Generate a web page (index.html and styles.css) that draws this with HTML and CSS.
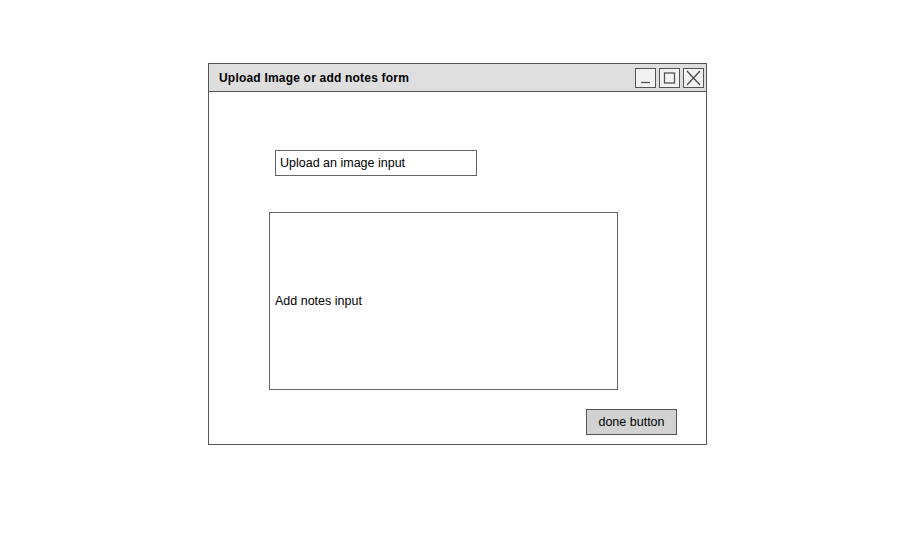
FILE: index.html
```html
<!DOCTYPE html>
<html>
<head>
<meta charset="utf-8">
<link rel="stylesheet" href="styles.css">
</head>
<body>
<div class="page">
  <div class="window">
    <div class="titlebar">
      <span class="title">Upload Image or add notes form</span>
      <div class="controls">
        <div class="ctl"><svg width="19" height="18" viewBox="0 0 19 18"><line x1="5" y1="13.5" x2="14" y2="13.5" stroke="#555" stroke-width="1.3"/></svg></div>
        <div class="ctl"><svg width="19" height="18" viewBox="0 0 19 18"><rect x="4.5" y="4" width="10" height="10" fill="none" stroke="#555" stroke-width="1.3"/></svg></div>
        <div class="ctl"><svg width="19" height="18" viewBox="0 0 19 18"><path d="M3 2 L16 16 M16 2 L3 16" stroke="#444" stroke-width="1.2" fill="none"/></svg></div>
      </div>
    </div>
    <div class="content">
      <div class="upload">Upload an image input</div>
      <div class="notes">Add notes input</div>
      <div class="done">done button</div>
    </div>
  </div>
</div>
</body>
</html>
```
FILE: styles.css
```css
html, body {
  margin: 0;
  padding: 0;
  background: #fff;
}
body {
  font-family: "Liberation Sans", Arial, sans-serif;
  color: #000;
}
.page {
  width: 899px;
  height: 559px;
  padding-top: 63px;
  padding-left: 208px;
  box-sizing: border-box;
}
.window {
  width: 499px;
  height: 382px;
  border: 1px solid #555;
  box-sizing: border-box;
  display: flex;
  flex-direction: column;
}
.titlebar {
  height: 28px;
  flex: none;
  background: #dedede;
  border-bottom: 1px solid #555;
  box-sizing: border-box;
  display: flex;
  align-items: center;
  justify-content: space-between;
  padding-left: 10px;
  padding-right: 2px;
}
.title {
  font-weight: bold;
  font-size: 12px;
  letter-spacing: 0.2px;
}
.controls {
  display: flex;
  gap: 3px;
}
.ctl {
  width: 21px;
  height: 20px;
  border: 1px solid #555;
  box-sizing: border-box;
  background: #f2f2f2;
  display: flex;
  align-items: center;
  justify-content: center;
}
.ctl svg {
  display: block;
}
.content {
  flex: 1;
  display: flex;
  flex-direction: column;
  align-items: flex-start;
  font-size: 12.5px;
}
.upload {
  margin-top: 58px;
  margin-left: 66px;
  width: 202px;
  height: 26px;
  border: 1px solid #666;
  box-sizing: border-box;
  display: flex;
  align-items: center;
  padding-left: 4px;
}
.notes {
  margin-top: 36px;
  margin-left: 60px;
  width: 349px;
  height: 178px;
  border: 1px solid #666;
  box-sizing: border-box;
  display: flex;
  align-items: center;
  padding-left: 5px;
}
.done {
  margin-top: 19px;
  align-self: flex-end;
  margin-right: 29px;
  width: 91px;
  height: 26px;
  border: 1px solid #555;
  box-sizing: border-box;
  background: #d2d2d2;
  display: flex;
  align-items: center;
  justify-content: center;
}
```
